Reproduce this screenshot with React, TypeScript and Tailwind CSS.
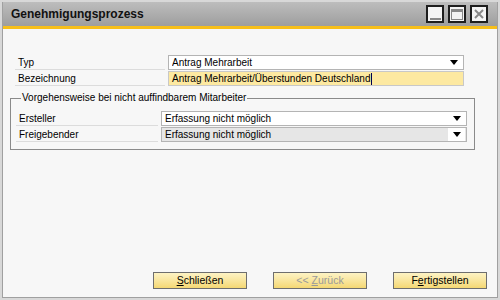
const FONT = { fontFamily: '"Liberation Sans", Arial, sans-serif' };

function Arrow() {
  return (
    <svg width="8" height="5" viewBox="0 0 8 5" className="shrink-0">
      <path d="M0 0h8L4 5z" fill="#000" />
    </svg>
  );
}

function Select({ value, gray }: { value: string; gray?: boolean }) {
  return (
    <div
      className={`flex h-[15px] flex-1 items-center border border-[#b4b4b4] pl-[3px] pr-[5px] ${
        gray ? 'bg-[#e6e6e6]' : 'bg-white'
      }`}
    >
      <span className="flex-1 truncate leading-none">{value}</span>
      {gray ? (
        <span className="-mr-[4px] flex h-[13px] w-[17px] items-center justify-center bg-white">
          <Arrow />
        </span>
      ) : (
        <Arrow />
      )}
    </div>
  );
}

function Row({ label, children, labelW }: { label: string; children: React.ReactNode; labelW: string }) {
  return (
    <div className="flex items-center gap-[3px]">
      <div className={`${labelW} flex h-[15px] items-center border-b border-[#dcdcdc] pl-[3px]`}>{label}</div>
      {children}
    </div>
  );
}

function WinBtn({ children }: { children: React.ReactNode }) {
  return (
    <div className="flex h-[18px] w-[18px] items-center justify-center border-2 border-[#1e1e1e] bg-[#f4f4f4]">
      {children}
    </div>
  );
}

function Btn({ children, disabled }: { children: React.ReactNode; disabled?: boolean }) {
  return (
    <button
      className={`flex h-[17px] w-[94px] items-center justify-center border border-[#6e6e6e] bg-gradient-to-b from-[#fdf3c4] to-[#f5d873] text-[10.5px] leading-none ${
        disabled ? 'text-[#9a9a9a]' : 'text-black'
      }`}
    >
      {children}
    </button>
  );
}

export default function App() {
  return (
    <div className="h-[300px] w-[500px] bg-[#d8d8d8] p-[2px] text-[10px] text-black" style={FONT}>
      <div className="flex h-full flex-col border border-t-0 border-[#a0a0a0]">
        <div className="flex h-[24px] items-center bg-gradient-to-b from-[#bdbdbd] to-[#9e9e9e] pl-[8px] pr-[9px]">
          <span className="flex-1 text-[12px] font-bold text-[#111]">Genehmigungsprozess</span>
          <div className="flex gap-[4px]">
            <WinBtn>
              <div className="mt-[9px] h-[2px] w-[11px] bg-[#888]" />
            </WinBtn>
            <WinBtn>
              <div className="h-[11px] w-[12px] border border-t-[3px] border-[#888]" />
            </WinBtn>
            <WinBtn>
              <svg width="10" height="10" viewBox="0 0 10 10">
                <path d="M1 1l8 8M9 1l-8 8" stroke="#888" strokeWidth="2" />
              </svg>
            </WinBtn>
          </div>
        </div>
        <div className="h-[3px] bg-[#f7bf1a]" />
        <div className="flex flex-1 flex-col bg-[#f7f7f7] px-[7px] pt-[26px] pb-[8px]">
          <div className="flex flex-col gap-[1px] pl-[5px] pr-[26px]">
            <Row label="Typ" labelW="w-[150px]">
              <Select value="Antrag Mehrarbeit" />
            </Row>
            <Row label="Bezeichnung" labelW="w-[150px]">
              <div className="flex h-[15px] flex-1 items-center border border-[#c8c8c8] bg-[#fde9a1] pl-[3px] leading-none">
                Antrag Mehrarbeit/Überstunden Deutschland
                <span className="ml-[1px] inline-block h-[12px] w-[1px] bg-[#000050]" />
              </div>
            </Row>
          </div>
          <div className="relative mt-[12px] mr-[15px] border border-[#8a8a8a] px-[5px] pt-[12px] pb-[7px]">
            <span className="absolute -top-[6px] left-[10px] bg-[#f7f7f7] px-[1px] leading-none">
              Vorgehensweise bei nicht auffindbarem Mitarbeiter
            </span>
            <div className="flex flex-col gap-[1px] pr-[2px]">
              <Row label="Ersteller" labelW="w-[142px]">
                <Select value="Erfassung nicht möglich" />
              </Row>
              <Row label="Freigebender" labelW="w-[142px]">
                <Select value="Erfassung nicht möglich" gray />
              </Row>
            </div>
          </div>
          <div className="flex-1" />
          <div className="flex justify-end gap-[26px] pr-[3px]">
            <Btn>
              <span>
                <u>S</u>chließen
              </span>
            </Btn>
            <Btn disabled>
              <span>
                &lt;&lt; <u>Z</u>urück
              </span>
            </Btn>
            <Btn>
              <span>
                F<u>e</u>rtigstellen
              </span>
            </Btn>
          </div>
        </div>
      </div>
    </div>
  );
}
